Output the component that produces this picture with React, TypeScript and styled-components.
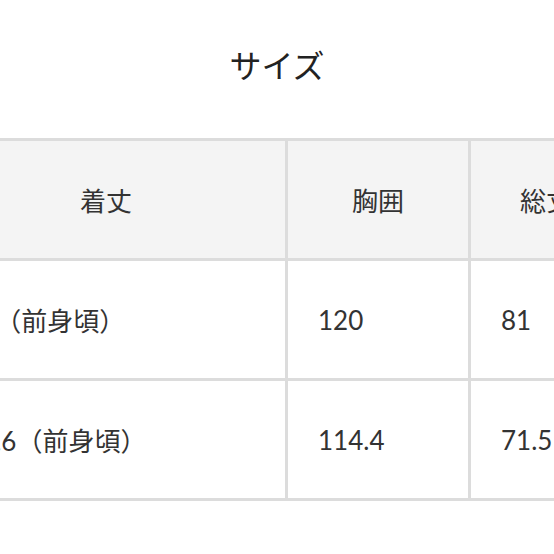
import styled, { createGlobalStyle } from "styled-components";

const GlobalStyle = createGlobalStyle`
  html, body {
    margin: 0;
    padding: 0;
    background: #ffffff;
  }
  body {
    font-family: Lato, "Noto Sans CJK JP", sans-serif;
    color: #333333;
  }
`;

const Page = styled.div`
  width: 554px;
  height: 554px;
  overflow: hidden;
  background: #ffffff;
`;

const Title = styled.h2`
  margin: 0;
  padding-top: 42px;
  height: 45px;
  margin-bottom: 51px;
  font-family: "Noto Sans CJK JP", sans-serif;
  font-size: 32px;
  font-weight: 400;
  line-height: 45px;
  text-align: center;
  color: #222222;
`;

// the table is wider than the page and scrolled sideways
const ScrollArea = styled.div`
  width: 554px;
  overflow: hidden;
`;

const SizeTable = styled.div`
  display: grid;
  grid-template-columns: 358px 180px 150px 150px;
  grid-auto-rows: 117px;
  gap: 3px;
  padding: 3px;
  width: max-content;
  margin-left: -76px;
  background: #dcdcdc;
`;

const Cell = styled.div<{ $head?: boolean; $inset?: number }>`
  display: flex;
  align-items: center;
  justify-content: ${({ $head }) => ($head ? "center" : "flex-start")};
  padding: 0 30px 0 ${({ $inset }) => $inset ?? 30}px;
  background: ${({ $head }) => ($head ? "#f4f4f4" : "#ffffff")};
  font-family: Lato, "Noto Sans CJK JP", sans-serif;
  font-size: 26px;
  color: #333333;
  white-space: nowrap;
`;

const headers = ["着丈", "胸囲", "総丈", "袖丈"];

const rows = [
  ["80（前身頃）", "120", "81", "58"],
  ["86.6（前身頃）", "114.4", "71.5", "55"],
];

export default function App() {
  return (
    <Page>
      <GlobalStyle />
      <Title>サイズ</Title>
      <ScrollArea>
        <SizeTable>
          {headers.map((h) => (
            <Cell $head key={h}>
              {h}
            </Cell>
          ))}
          {rows.map((row, i) =>
            row.map((value, j) => (
              <Cell key={`${i}-${j}`} $inset={j === 0 ? 38 : 30}>
                {value}
              </Cell>
            ))
          )}
        </SizeTable>
      </ScrollArea>
    </Page>
  );
}
